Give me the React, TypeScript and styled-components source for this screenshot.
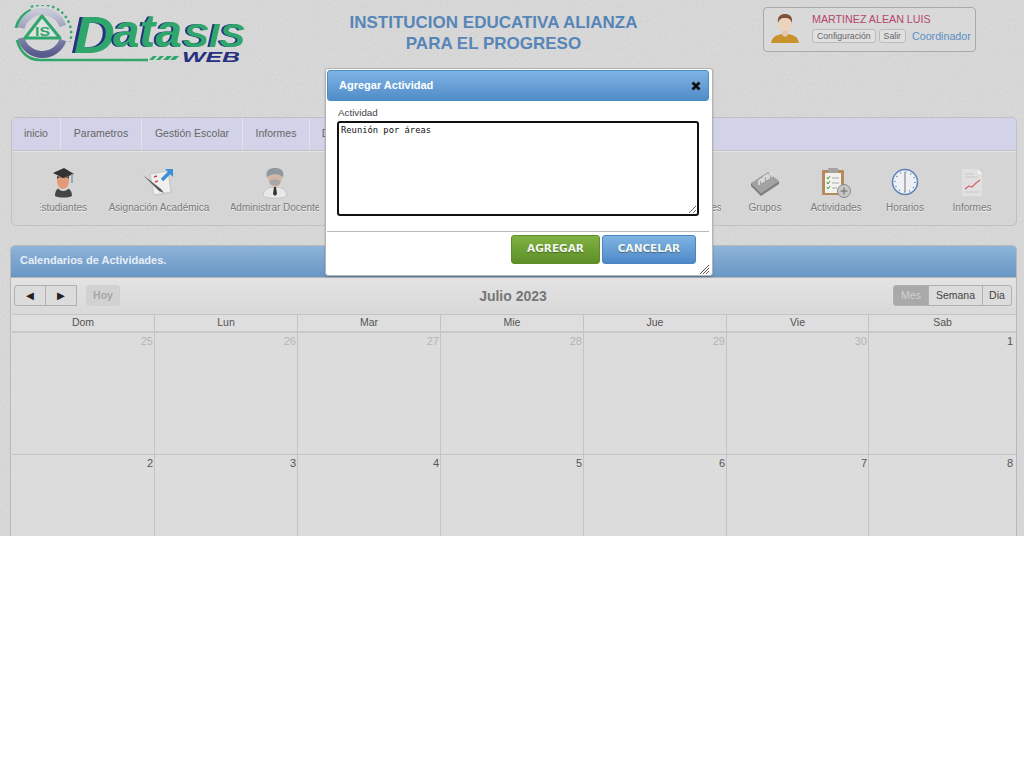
import styled, { createGlobalStyle } from "styled-components";

const NOISE =
  "data:image/svg+xml,%3Csvg xmlns='http://www.w3.org/2000/svg' width='256' height='256'%3E%3Cfilter id='n'%3E%3CfeTurbulence type='fractalNoise' baseFrequency='0.8' numOctaves='2'/%3E%3CfeColorMatrix values='0 0 0 0 1 0 0 0 0 1 0 0 0 0 1 0 0 0 0.4 -0.08'/%3E%3C/filter%3E%3Crect width='256' height='256' filter='url(%23n)'/%3E%3C/svg%3E";

const GlobalStyle = createGlobalStyle`
  html, body {
    margin: 0;
    padding: 0;
    background: #fff;
    font-family: "Liberation Sans", Arial, sans-serif;
  }
`;

const SPage = styled.div`
  position: relative;
  width: 1024px;
  height: 536px;
  overflow: hidden;
  background-color: #d1d1d1;
  background-image: url("${NOISE}");
`;

const SHeader = styled.header`
  display: flex;
  height: 117px;
  padding: 5px 48px 0 14px;
  box-sizing: border-box;
`;

const SLogo = styled.svg`
  display: block;
  width: 232px;
  height: 62px;
  flex: none;
`;

const SLogoText = styled.text<{ $shadow: number }>`
  font-family: "Liberation Sans", Arial, sans-serif;
  font-style: italic;
  font-weight: bold;
  fill: #2fa66c;
  filter: drop-shadow(${(p) => -p.$shadow}px 0 0 #27307f);
`;

const SLogoSub = styled.text`
  font-family: "Liberation Sans", Arial, sans-serif;
  font-style: italic;
  font-weight: bold;
  fill: #27307f;
`;

const SLogoMark = styled.text`
  font-family: "Liberation Sans", Arial, sans-serif;
  font-weight: bold;
  fill: #2fa66c;
`;

const STitle = styled.h1`
  flex: 1;
  margin: 7px 0 0;
  padding-right: 22px;
  text-align: center;
  font-size: 17px;
  font-weight: bold;
  line-height: 21px;
  color: #5685b8;
`;

const SUserCard = styled.div`
  display: flex;
  flex: none;
  width: 213px;
  height: 45px;
  margin-top: 2px;
  box-sizing: border-box;
  border: 1px solid #a9a9a9;
  border-radius: 4px;
  padding: 5px 0 0 7px;
  background: #d9d9d9;
`;

const SUserInfo = styled.div`
  margin-left: 13px;
`;

const SUserName = styled.div`
  margin-top: -1px;
  font-size: 10.7px;
  line-height: 14px;
  color: #b4476a;
`;

const SUserActions = styled.div`
  display: flex;
  align-items: center;
  gap: 3px;
  margin-top: 3px;
`;

const SMiniButton = styled.span`
  border: 1px solid #bbb;
  border-radius: 3px;
  padding: 1px 4px;
  background: #e0e0e0;
  font-size: 8.7px;
  line-height: 10px;
  color: #666;
`;

const SRole = styled.span`
  margin: 0 0 0 3px;
  font-size: 10.7px;
  color: #5a8fc4;
`;

const SMenuPanel = styled.div`
  margin: 0 7px 0 11px;
  border: 1px solid #c0c0c0;
  border-radius: 5px;
  background: #d5d5d5;
  overflow: hidden;
`;

const SMenuBar = styled.nav`
  display: flex;
  height: 32px;
  border-bottom: 1px solid #c3c3c3;
  background: #d2d3e8;
`;

const SMenuItem = styled.div<{ $width: number }>`
  width: ${(p) => p.$width}px;
  flex: none;
  box-sizing: border-box;
  border-right: 1px solid #e4e4e8;
  text-align: center;
  font-size: 10.5px;
  line-height: 30px;
  color: #666;
`;

const SToolRow = styled.div`
  display: flex;
  height: 74px;
  padding-left: 28px;
  border-top: 1px solid #e4e4e4;
  box-sizing: border-box;
`;

const STool = styled.div<{ $width: number }>`
  display: flex;
  flex: none;
  flex-direction: column;
  align-items: center;
  width: ${(p) => p.$width}px;
  padding-top: 14px;
  box-sizing: border-box;
`;

const SToolIcon = styled.svg`
  display: block;
  width: 34px;
  height: 34px;
`;

const SToolSlot = styled.div`
  height: 34px;
`;

const SToolLabel = styled.div<{ $clip?: boolean }>`
  display: flex;
  justify-content: ${(p) => (p.$clip ? "flex-end" : "center")};
  width: 100%;
  margin-top: 1px;
  overflow: hidden;
  white-space: nowrap;
  font-size: 10px;
  line-height: 14px;
  color: #7a7a7a;
  text-shadow: 0 1px 0 #eee;
`;

const SToolGap = styled.div<{ $width: number }>`
  flex: none;
  width: ${(p) => p.$width}px;
`;

const SCalendarPanel = styled.section`
  margin: 19px 7px 0 10px;
  border: 1px solid #b9b9b9;
  border-bottom: 0;
  border-radius: 5px 5px 0 0;
  background: #dcdcdc;
`;

const SCalendarHead = styled.div`
  height: 31px;
  padding-left: 9px;
  border-bottom: 1px solid #b5b5b5;
  border-radius: 4px 4px 0 0;
  background: linear-gradient(#8db4d8, #6996c5);
  font-size: 11px;
  font-weight: bold;
  line-height: 29px;
  color: #e6eef5;
`;

const SToolbar = styled.div`
  display: flex;
  align-items: center;
  justify-content: space-between;
  height: 34px;
  padding: 0 4px 2px 3px;
  background: linear-gradient(#e3e3e3, #d9d9d9);
`;

const SButtonGroup = styled.div`
  display: flex;
  width: 240px;
`;

const SRightGroup = styled(SButtonGroup)`
  justify-content: flex-end;
`;

const SCalButton = styled.div<{ $width: number; $active?: boolean; $disabled?: boolean }>`
  width: ${(p) => p.$width}px;
  height: 21px;
  box-sizing: border-box;
  border: 1px solid ${(p) => (p.$disabled ? "#d0d0d0" : "#b0b0b0")};
  margin-left: -1px;
  background: ${(p) => (p.$active ? "#a9a9a9" : p.$disabled ? "#d2d2d2" : "#dcdcdc")};
  text-align: center;
  font-size: 10.5px;
  font-weight: ${(p) => (p.$disabled ? "bold" : "normal")};
  line-height: 19px;
  color: ${(p) => (p.$active ? "#d0d0d0" : p.$disabled ? "#a6a6a6" : "#444")};
  &:first-child {
    margin-left: 0;
    border-radius: 3px 0 0 3px;
  }
  &:last-child {
    border-radius: 0 3px 3px 0;
  }
`;

const SArrow = styled(SCalButton)`
  font-size: 13px;
  color: #222;
`;

const SHoy = styled(SCalButton)`
  margin-left: 9px;
  border-radius: 3px !important;
`;

const SMonth = styled.h2`
  margin: 2px 0 0;
  font-size: 14px;
  font-weight: bold;
  color: #777;
`;

const SGrid = styled.div`
  display: grid;
  grid-template-columns: repeat(5, 143px) 142px 1fr;
  margin-left: 1px;
  border-top: 1px solid #c4c4c4;
`;

const SDayName = styled.div`
  height: 18px;
  box-sizing: border-box;
  border-right: 1px solid #c4c4c4;
  border-bottom: 2px solid #c9c9c9;
  text-align: center;
  font-size: 10.5px;
  line-height: 15px;
  color: #555;
  background: #dedede;
  &:nth-child(7) {
    border-right: 0;
  }
`;

const SDay = styled.div<{ $muted?: boolean }>`
  height: 122px;
  box-sizing: border-box;
  padding: 1px 1px 0 0;
  border-right: 1px solid #c4c4c4;
  border-bottom: 1px solid #c4c4c4;
  text-align: right;
  font-size: 11px;
  line-height: 14px;
  color: ${(p) => (p.$muted ? "#b4b4b4" : "#555")};
  &:nth-child(7n) {
    padding-right: 3px;
    border-right: 0;
  }
`;

const SModal = styled.div`
  position: absolute;
  left: 325px;
  top: 68px;
  width: 388px;
  height: 208px;
  box-sizing: border-box;
  border: 1px solid #b4b4b4;
  border-radius: 3px;
  padding: 1px 3px 1px 1px;
  background: #fff;
  box-shadow: 0 1px 2px rgba(0, 0, 0, 0.25);
`;

const SModalHead = styled.div`
  display: flex;
  align-items: center;
  justify-content: space-between;
  height: 31px;
  box-sizing: border-box;
  padding: 0 7px 2px 11px;
  border: 1px solid #4a8fc4;
  border-radius: 3px;
  background: linear-gradient(#7fb4e4, #518cc9);
  font-size: 11px;
  font-weight: bold;
  color: #fff;
`;

const SClose = styled.svg`
  display: block;
  width: 10px;
  height: 10px;
  margin-top: 3px;
`;

const SModalBody = styled.div`
  padding: 6px 0 0 11px;
`;

const SLabel = styled.label`
  display: block;
  font-size: 9.8px;
  line-height: 12px;
  color: #444;
`;

const STextArea = styled.textarea`
  display: block;
  width: 362px;
  height: 95px;
  margin: 2px 0 0 -1px;
  box-sizing: border-box;
  border: 2px solid #111;
  border-radius: 3px;
  padding: 1px 2px;
  outline: 0;
  background: #fff;
  font-family: "DejaVu Sans Mono", monospace;
  font-size: 8.8px;
  line-height: 12px;
  color: #111;
`;

const SModalFoot = styled.div`
  display: flex;
  justify-content: flex-end;
  gap: 2px;
  margin-top: 15px;
  padding: 3px 13px 0 0;
  border-top: 1px solid #b9b9b9;
`;

const SAction = styled.button<{ $variant: "green" | "blue" }>`
  width: ${(p) => (p.$variant === "green" ? 89 : 94)}px;
  height: 29px;
  padding: 0 0 3px;
  border: 1px solid ${(p) => (p.$variant === "green" ? "#5f8d28" : "#4a86c0")};
  border-radius: 3px;
  background: ${(p) =>
    p.$variant === "green" ? "linear-gradient(#80b242, #5c9027)" : "linear-gradient(#7fb3e2, #4f8ac8)"};
  font-family: "DejaVu Sans", sans-serif;
  font-size: 10.5px;
  font-weight: bold;
  color: #f2f6ee;
  text-shadow: 0 1px 1px rgba(0, 0, 0, 0.35);
`;

const SGrip = styled.svg`
  position: absolute;
  right: 3px;
  bottom: 1px;
  width: 10px;
  height: 10px;
`;

const DAYS = ["Dom", "Lun", "Mar", "Mie", "Jue", "Vie", "Sab"];
const CELLS = [
  { n: 25, muted: true },
  { n: 26, muted: true },
  { n: 27, muted: true },
  { n: 28, muted: true },
  { n: 29, muted: true },
  { n: 30, muted: true },
  { n: 1 },
  { n: 2 },
  { n: 3 },
  { n: 4 },
  { n: 5 },
  { n: 6 },
  { n: 7 },
  { n: 8 },
];

// viewBox keeps the page coordinates of the logo
function Logo() {
  return (
    <SLogo viewBox="14 5 232 62">
      <defs>
        <linearGradient id="ring" x1="0" y1="0" x2="0" y2="1">
          <stop offset="0" stopColor="#c9cad8" />
          <stop offset="1" stopColor="#565a8c" />
        </linearGradient>
      </defs>
      <path d="M16 28A27 27 0 0 1 31 10" fill="none" stroke="#2fa66c" strokeWidth="3" />
      <path d="M31 7A29 29 0 0 1 70 42" fill="none" stroke="#2fa66c" strokeWidth="2.400" strokeDasharray="2.400 3" />
      <path d="M21 28A22 22 0 0 1 63 26M63 40A22 22 0 0 1 21 38" fill="none" stroke="url(#ring)" strokeWidth="7" />
      <path d="M17 40C20 52 28 60 40 60H148" fill="none" stroke="#2fa66c" strokeWidth="2.600" />
      <path d="M42 16L60 38H25Z" fill="#dfe3df" stroke="#2fa66c" strokeWidth="3" strokeLinejoin="round" />
      <SLogoMark x="35" y="36" fontSize="13" textLength="15" lengthAdjust="spacingAndGlyphs">IS</SLogoMark>
      <path d="M149 60L153 56H157L153 60ZM156 60L160 56H164L160 60ZM163 60L167 56H172L168 60ZM170 60L174 56H179L175 60Z" fill="#2fa66c" />
      <SLogoText $shadow={2.500} x="74" y="53" fontSize="52" textLength="41" lengthAdjust="spacingAndGlyphs">D</SLogoText>
      <SLogoText $shadow={1.500} x="113" y="47" fontSize="46" textLength="69" lengthAdjust="spacingAndGlyphs">ata</SLogoText>
      <SLogoText $shadow={1.500} x="183" y="47" fontSize="34" textLength="62" lengthAdjust="spacingAndGlyphs">SIS</SLogoText>
      <SLogoSub x="182" y="62" fontSize="14" textLength="58" lengthAdjust="spacingAndGlyphs">WEB</SLogoSub>
    </SLogo>
  );
}

function UserIcon() {
  return (
    <svg width="28" height="31" viewBox="0 0 28 31">
      <path d="M0 30C1 23 7 21 14 21S27 23 28 30Z" fill="#c8922c" />
      <ellipse cx="14" cy="11" rx="6.500" ry="8" fill="#ecd3bd" />
      <path d="M7 10C6 3 10 1 14 1S22 3 21 10C19 5 17 5 14 5S9 5 7 10Z" fill="#7d5236" />
      <path d="M11 18H17V22L14 24L11 22Z" fill="#e5c7ae" />
    </svg>
  );
}

function StudentIcon() {
  return (
    <SToolIcon viewBox="0 0 34 34">
      <path d="M8 30C8 24 11 21 16 21S25 24 25 30C21 32 12 32 8 30Z" fill="#454545" />
      <path d="M11 22C13 26 19 26 22 22L20 20H13Z" fill="#d8d8d8" />
      <ellipse cx="16" cy="15" rx="6" ry="8" fill="#e39a78" />
      <path d="M6 7L17 2L27 8L16 12Z" fill="#333" />
      <path d="M10 10V13C13 10 20 10 22 13V10L16 12Z" fill="#3f3f3f" />
      <path d="M25 8V17" stroke="#8fa6b4" strokeWidth="1.800" />
    </SToolIcon>
  );
}

function AssignIcon() {
  return (
    <SToolIcon viewBox="0 0 34 34">
      <path d="M10 10L27 6L31 27L14 31Z" fill="#d0d0d0" />
      <path d="M8 8L26 5L29 26L12 29Z" fill="#efefef" stroke="#c6c6c6" />
      <path d="M1 9L19 23L22 27L17 25Z" fill="#5a5a5a" />
      <path d="M12 11L15 10M13 16L16 15" stroke="#c44" strokeWidth="1.500" />
      <path d="M20 14L28 6" stroke="#3b8fd8" strokeWidth="3.500" />
      <path d="M23 3H31V11Z" fill="#3b8fd8" />
    </SToolIcon>
  );
}

function TeacherIcon() {
  return (
    <SToolIcon viewBox="0 0 34 34">
      <path d="M5 30C5 24 10 21 17 21S29 24 29 30C24 33 10 33 5 30Z" fill="#e8e8e8" stroke="#c4c4c4" />
      <ellipse cx="17" cy="12" rx="7" ry="9" fill="#d2b6a6" />
      <path d="M9 12C7 4 12 2 17 2S27 4 25 12C23 7 11 7 9 12Z" fill="#8f989e" />
      <path d="M12 15C14 13 20 13 22 15V18L17 20L12 18Z" fill="#a8a8a8" />
      <path d="M16 21H18L19 28L17 30L15 28Z" fill="#333" />
    </SToolIcon>
  );
}

function GroupsIcon() {
  return (
    <SToolIcon viewBox="0 0 34 34">
      <path d="M3 17L20 6L31 15L13 27Z" fill="#a2a2a2" />
      <path d="M3 17L13 27V30L3 20ZM13 27L31 15V18L13 30Z" fill="#7f7f7f" />
      <path d="M11 19V15L14 13V17M16 16V11L19 9V14M21 13V9L24 7V11" fill="none" stroke="#dcdcdc" strokeWidth="1.800" />
    </SToolIcon>
  );
}

function ActivitiesIcon() {
  return (
    <SToolIcon viewBox="0 0 34 34">
      <rect x="3" y="4" width="22" height="25" rx="1" fill="#b58a5c" />
      <rect x="6" y="7" width="16" height="20" fill="#f2f2ee" />
      <rect x="9" y="2" width="10" height="5" rx="1" fill="#a4a4a4" />
      <path d="M8 11L9 13L11 10M8 16L9 18L11 15M8 21L9 23L11 20" fill="none" stroke="#4a9a3c" />
      <path d="M13 12H20M13 17H20M13 22H18" stroke="#aaa" />
      <circle cx="25" cy="25" r="6.500" fill="#c6c6c6" stroke="#8a8a8a" />
      <path d="M25 21.500V28.500M21.500 25H28.500" stroke="#666" />
    </SToolIcon>
  );
}

function ClockIcon() {
  return (
    <SToolIcon viewBox="0 0 34 34">
      <circle cx="17" cy="16" r="12.500" fill="#eef0f4" stroke="#5c82b8" strokeWidth="1.500" />
      <circle cx="17" cy="16" r="10" fill="none" stroke="#5580c0" strokeWidth="1.500" strokeDasharray="1 4.240" />
      <path d="M17 6V26" stroke="#8a8a8a" strokeWidth="1.200" />
    </SToolIcon>
  );
}

function ReportIcon() {
  return (
    <SToolIcon viewBox="0 0 34 34">
      <path d="M7 3H23L27 8V30H7Z" fill="#e0e0e0" />
      <path d="M23 3V8H27Z" fill="#f2f2f2" />
      <path d="M10 8H19M10 11H23M10 26H24" stroke="#c8c8c8" />
      <path d="M10 23L14 20L17 21L21 17L25 14" fill="none" stroke="#d4626a" strokeWidth="1.200" />
    </SToolIcon>
  );
}

function App() {
  return (
    <SPage>
      <GlobalStyle />
      <SHeader>
        <Logo />
        <STitle>
          INSTITUCION EDUCATIVA ALIANZA
          <br />
          PARA EL PROGRESO
        </STitle>
        <SUserCard>
          <UserIcon />
          <SUserInfo>
            <SUserName>MARTINEZ ALEAN LUIS</SUserName>
            <SUserActions>
              <SMiniButton>Configuración</SMiniButton>
              <SMiniButton>Salir</SMiniButton>
              <SRole>Coordinador</SRole>
            </SUserActions>
          </SUserInfo>
        </SUserCard>
      </SHeader>

      <SMenuPanel>
        <SMenuBar>
          <SMenuItem $width={49}>inicio</SMenuItem>
          <SMenuItem $width={81}>Parametros</SMenuItem>
          <SMenuItem $width={101}>Gestión Escolar</SMenuItem>
          <SMenuItem $width={67}>Informes</SMenuItem>
          <SMenuItem $width={52}>Datos</SMenuItem>
        </SMenuBar>
        <SToolRow>
          <STool $width={47}>
            <StudentIcon />
            <SToolLabel $clip>Estudiantes</SToolLabel>
          </STool>
          <STool $width={144}>
            <AssignIcon />
            <SToolLabel>Asignación Académica</SToolLabel>
          </STool>
          <STool $width={88}>
            <TeacherIcon />
            <SToolLabel>Administrar Docente</SToolLabel>
          </STool>
          <SToolGap $width={344} />
          <STool $width={58}>
            <SToolSlot />
            <SToolLabel>Evaluaciones</SToolLabel>
          </STool>
          <STool $width={88}>
            <GroupsIcon />
            <SToolLabel>Grupos</SToolLabel>
          </STool>
          <STool $width={54}>
            <ActivitiesIcon />
            <SToolLabel>Actividades</SToolLabel>
          </STool>
          <STool $width={84}>
            <ClockIcon />
            <SToolLabel>Horarios</SToolLabel>
          </STool>
          <STool $width={50}>
            <ReportIcon />
            <SToolLabel>Informes</SToolLabel>
          </STool>
        </SToolRow>
      </SMenuPanel>

      <SCalendarPanel>
        <SCalendarHead>Calendarios de Actividades.</SCalendarHead>
        <SToolbar>
          <SButtonGroup>
            <SArrow $width={32}>◄</SArrow>
            <SArrow $width={32}>►</SArrow>
            <SHoy $width={34} $disabled>
              Hoy
            </SHoy>
          </SButtonGroup>
          <SMonth>Julio 2023</SMonth>
          <SRightGroup>
            <SCalButton $width={36} $active>
              Mes
            </SCalButton>
            <SCalButton $width={55}>Semana</SCalButton>
            <SCalButton $width={30}>Dia</SCalButton>
          </SRightGroup>
        </SToolbar>
        <SGrid>
          {DAYS.map((d) => (
            <SDayName key={d}>{d}</SDayName>
          ))}
          {CELLS.map((c) => (
            <SDay key={c.n} $muted={c.muted}>
              {c.n}
            </SDay>
          ))}
        </SGrid>
      </SCalendarPanel>

      <SModal>
        <SModalHead>
          Agregar Actividad
          <SClose viewBox="0 0 10 10">
            <path d="M1.500 1.500L8.500 8.500M8.500 1.500L1.500 8.500" stroke="#111" strokeWidth="2.800" />
          </SClose>
        </SModalHead>
        <SModalBody>
          <SLabel>Actividad</SLabel>
          <STextArea defaultValue="Reunión por áreas" />
        </SModalBody>
        <SModalFoot>
          <SAction $variant="green">AGREGAR</SAction>
          <SAction $variant="blue">CANCELAR</SAction>
        </SModalFoot>
        <SGrip viewBox="0 0 10 10">
          <path d="M1 10L10 1M4 10L10 4M7 10L10 7" stroke="#555" strokeWidth="1" />
        </SGrip>
      </SModal>
    </SPage>
  );
}

export default App;
